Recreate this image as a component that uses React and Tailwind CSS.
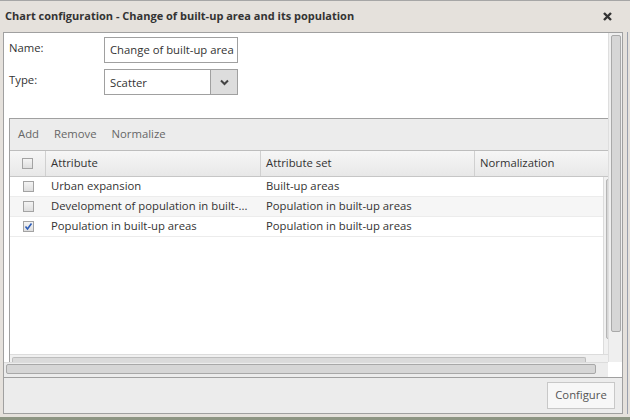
import React from "react";

function Check({ checked }) {
  return (
    <div className="w-[11px] h-[11px] border border-[#a3a3a3] bg-gradient-to-b from-[#f4f4f4] to-[#dedede] flex items-center justify-center">
      {checked && (
        <svg width="9" height="9" viewBox="0 0 9 9">
          <path d="M1.5 4.5 L3.5 7 L7.5 1.5" fill="none" stroke="#2d5db8" strokeWidth="1.6" />
        </svg>
      )}
    </div>
  );
}

const rows = [
  { a: "Urban expansion", s: "Built-up areas", c: false },
  { a: "Development of population in built-...", s: "Population in built-up areas", c: false },
  { a: "Population in built-up areas", s: "Population in built-up areas", c: true },
];

export default function App() {
  return (
    <div className="w-[630px] h-[420px] overflow-hidden bg-[#e5e1dc] font-['Open_Sans',sans-serif] text-[#333] flex flex-col">
      <div className="h-[1px] bg-[#a6a6a6] shrink-0" />
      <div className="h-[31px] shrink-0 flex items-center justify-between pl-[5px] pr-[18px]">
        <span className="text-[11px] font-bold">Chart configuration - Change of built-up area and its population</span>
        <svg width="9" height="9" viewBox="0 0 9 9">
          <path d="M1 1 L8 8 M8 1 L1 8" stroke="#333" strokeWidth="2.4" />
        </svg>
      </div>
      <div className="flex shrink-0">
        <div className="w-[3px] shrink-0" />
        <div className="w-[620px] h-[382px] border border-[#a0a0a0] flex flex-col shrink-0">
          <div className="flex h-[344px] shrink-0">
            <div className="w-[604px] flex flex-col shrink-0">
              <div className="h-[329px] bg-white overflow-hidden flex flex-col shrink-0">
                <div className="flex flex-col gap-[6px] pt-[4px] pl-[5px]">
                  <div className="flex">
                    <div className="w-[95px] text-[11.3px] pt-[3px]">Name:</div>
                    <div className="w-[134px] h-[26px] border border-[#a0a0a0] flex items-center pl-[5px] text-[11.3px] whitespace-nowrap overflow-hidden">Change of built-up area</div>
                  </div>
                  <div className="flex">
                    <div className="w-[95px] text-[11.3px] pt-[3px]">Type:</div>
                    <div className="w-[134px] h-[26px] border border-[#a0a0a0] flex text-[11.3px]">
                      <div className="flex-1 flex items-center pl-[5px] pt-[2px]">Scatter</div>
                      <div className="w-[27px] bg-[#dddddd] border-l border-[#a0a0a0] flex items-center justify-center">
                        <svg width="9" height="7" viewBox="0 0 9 7">
                          <path d="M1 1.5 L4.5 5 L8 1.5" fill="none" stroke="#444" strokeWidth="2" />
                        </svg>
                      </div>
                    </div>
                  </div>
                </div>
                <div className="mt-[23px] ml-[5px] w-[613px] shrink-0 border-l border-t border-[#a0a0a0] flex flex-col flex-1">
                  <div className="h-[32px] bg-[#ececec] border-b border-[#bdbdbd] flex items-center pl-[8px] gap-[15px] text-[11.3px] text-[#666]">
                    <span>Add</span>
                    <span>Remove</span>
                    <span>Normalize</span>
                  </div>
                  <div className="h-[26px] bg-gradient-to-b from-[#f6f6f6] to-[#e8e8e8] border-b border-[#c6c6c6] flex text-[11.3px]">
                    <div className="w-[36px] border-r border-[#d0d0d0] flex items-center justify-center"><Check /></div>
                    <div className="w-[215px] border-r border-[#d0d0d0] flex items-center pl-[5px]">Attribute</div>
                    <div className="w-[214px] border-r border-[#d0d0d0] flex items-center pl-[5px]">Attribute set</div>
                    <div className="flex-1 flex items-center pl-[5px]">Normalization</div>
                  </div>
                  <div className="flex flex-1">
                    <div className="w-[593px] flex flex-col">
                      {rows.map((r, i) => (
                        <div key={i} className={`h-[20px] border-b border-[#ececec] flex items-center text-[11.3px] ${i === 1 ? "bg-[#f6f6f6]" : "bg-white"}`}>
                          <div className="w-[36px] flex justify-center"><Check checked={r.c} /></div>
                          <div className="w-[215px] pl-[5px] whitespace-nowrap">{r.a}</div>
                          <div className="w-[214px] pl-[5px] whitespace-nowrap">{r.s}</div>
                        </div>
                      ))}
                    </div>
                    <div className="w-[17px] bg-[#f1f1f1] border-l border-[#dcdcdc] pl-[2px] pt-[2px]">
                      <div className="w-[11px] h-[160px] bg-[#d6d6d6] border border-[#b5b5b5] rounded-[2px]" />
                    </div>
                  </div>
                  <div className="h-[8px] shrink-0 bg-[#f0f0f0] border-t border-[#dcdcdc] pl-[2px] pt-[2px]">
                    <div className="w-[574px] h-[6px] bg-[#dadada] border border-[#bdbdbd] border-b-0 rounded-t-[2px]" />
                  </div>
                </div>
              </div>
              <div className="h-[15px] bg-[#ececec] border-t border-[#dcdcdc] shrink-0 pl-[2px] pt-[1px]">
                <div className="w-[590px] h-[10px] bg-[#d6d6d6] border border-[#a8a8a8] rounded-[2px]" />
              </div>
            </div>
            <div className="w-[14px] flex flex-col shrink-0">
              <div className="flex-1 bg-[#efefef] border-l border-[#dedede] pl-[2px] pt-[2px]">
                <div className="w-[10px] h-[297px] bg-[#d6d6d6] border border-[#a9a9a9] rounded-[2px]" />
              </div>
              <div className="h-[15px] bg-white" />
            </div>
          </div>
          <div className="flex-1 bg-[#ececec] border-t border-[#a0a0a0] flex items-center justify-end pr-[7px]">
            <div className="w-[68px] h-[27px] border border-[#c8c8c8] bg-[#f7f7f7] flex items-center justify-center text-[11.3px] text-[#555]">Configure</div>
          </div>
        </div>
        <div className="w-[4px] shrink-0" />
        <div className="w-[1px] h-[382px] bg-[#9aa0ad] shrink-0" />
      </div>
      <div className="h-[3px] shrink-0" />
      <div className="flex-1 bg-[#8d9583]" />
    </div>
  );
}
